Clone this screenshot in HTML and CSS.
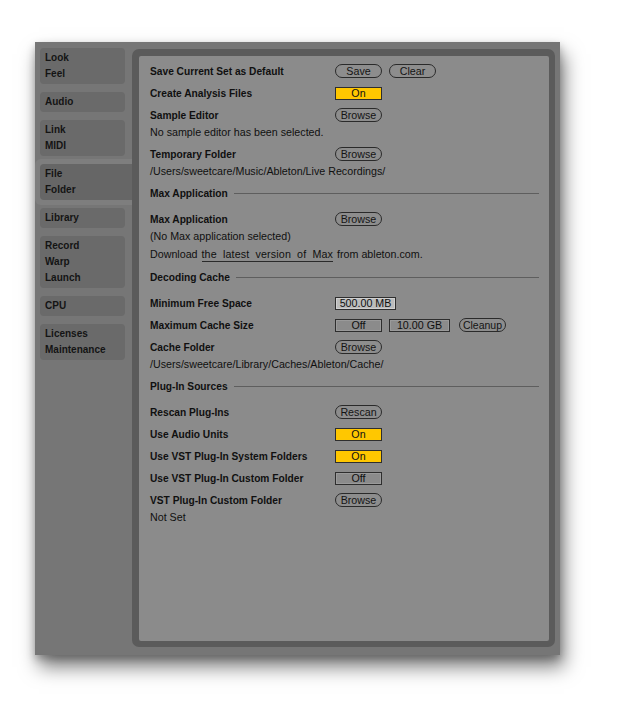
FILE: index.html
```html
<!DOCTYPE html>
<html>
<head>
<meta charset="utf-8">
<link rel="stylesheet" href="styles.css">
</head>
<body>
<div class="page">
<div class="window">
  <div class="sidebar">
    <div class="tab"><div>Look</div><div>Feel</div></div>
    <div class="tab"><div>Audio</div></div>
    <div class="tab"><div>Link</div><div>MIDI</div></div>
    <div class="tab-halo"><div class="tab selected"><div>File</div><div>Folder</div></div></div>
    <div class="tab"><div>Library</div></div>
    <div class="tab"><div>Record</div><div>Warp</div><div>Launch</div></div>
    <div class="tab"><div>CPU</div></div>
    <div class="tab"><div>Licenses</div><div>Maintenance</div></div>
  </div>
  <div class="frame">
    <div class="panel">
      <div class="row"><span class="label">Save Current Set as Default</span><div class="controls"><span class="pill">Save</span><span class="pill">Clear</span></div></div>
      <div class="row"><span class="label">Create Analysis Files</span><div class="controls"><span class="toggle on">On</span></div></div>
      <div class="row"><span class="label">Sample Editor</span><div class="controls"><span class="pill">Browse</span></div></div>
      <div class="sub">No sample editor has been selected.</div>
      <div class="row"><span class="label">Temporary Folder</span><div class="controls"><span class="pill">Browse</span></div></div>
      <div class="sub">/Users/sweetcare/Music/Ableton/Live Recordings/</div>

      <div class="section">Max Application</div>
      <div class="row"><span class="label">Max Application</span><div class="controls"><span class="pill">Browse</span></div></div>
      <div class="sub tight">(No Max application selected)</div>
      <div class="sub note">Download <span class="link">the latest version of Max</span> from ableton.com.</div>

      <div class="section">Decoding Cache</div>
      <div class="row"><span class="label">Minimum Free Space</span><div class="controls"><span class="field light">500.00 MB</span></div></div>
      <div class="row"><span class="label">Maximum Cache Size</span><div class="controls"><span class="toggle">Off</span><span class="field">10.00 GB</span><span class="pill auto">Cleanup</span></div></div>
      <div class="row"><span class="label">Cache Folder</span><div class="controls"><span class="pill">Browse</span></div></div>
      <div class="sub">/Users/sweetcare/Library/Caches/Ableton/Cache/</div>

      <div class="section">Plug-In Sources</div>
      <div class="row"><span class="label">Rescan Plug-Ins</span><div class="controls"><span class="pill">Rescan</span></div></div>
      <div class="row"><span class="label">Use Audio Units</span><div class="controls"><span class="toggle on">On</span></div></div>
      <div class="row"><span class="label">Use VST Plug-In System Folders</span><div class="controls"><span class="toggle on">On</span></div></div>
      <div class="row"><span class="label">Use VST Plug-In Custom Folder</span><div class="controls"><span class="toggle">Off</span></div></div>
      <div class="row"><span class="label">VST Plug-In Custom Folder</span><div class="controls"><span class="pill">Browse</span></div></div>
      <div class="sub">Not Set</div>
    </div>
  </div>
</div>
</div>
</body>
</html>
```

FILE: styles.css
```css
html, body {
  margin: 0;
  padding: 0;
  background: #ffffff;
}

body {
  font-family: "Liberation Sans", Arial, sans-serif;
  color: #101010;
}

.page {
  padding: 42px 0 57px 35px;
}

.window {
  width: 525px;
  height: 613px;
  background: #767676;
  display: flex;
  box-shadow: 4px 12px 18px rgba(0, 0, 0, 0.5), 0 4px 8px rgba(0, 0, 0, 0.25);
}

.sidebar {
  width: 97px;
  flex: none;
  box-sizing: border-box;
  padding: 6px 0 0 5px;
  display: flex;
  flex-direction: column;
  gap: 8px;
}

.tab {
  width: 85px;
  box-sizing: border-box;
  background: #6a6a6a;
  border-radius: 4px;
  padding: 2px 0 2px 5px;
  font-size: 10px;
  font-weight: bold;
  line-height: 16px;
  color: #141414;
}

.tab-halo {
  margin: -5px 0 -5px -5px;
  padding: 5px 0 5px 5px;
  width: 92px;
  background: #7e7e7e;
  border-radius: 6px 0 0 6px;
}

.tab.selected {
  width: 92px;
  background: #666666;
  border-radius: 4px 0 0 4px;
}

.frame {
  margin: 7px 0 8px 0;
  width: 423px;
  flex: none;
  box-sizing: border-box;
  background: #5b5b5b;
  border-radius: 7px;
  padding: 7px 6px 6px 7px;
  display: flex;
}

.panel {
  flex: 1;
  background: #8b8b8b;
  border-radius: 2px;
  padding: 4px 10px 0 11px;
  display: flex;
  flex-direction: column;
}

.row {
  height: 22px;
  display: flex;
  align-items: center;
  flex: none;
}

.label {
  width: 185px;
  flex: none;
  font-size: 10.2px;
  font-weight: bold;
  white-space: nowrap;
}

.controls {
  display: flex;
  align-items: center;
  gap: 7px;
}

.sub {
  height: 12px;
  line-height: 12px;
  font-size: 10.7px;
  margin-bottom: 5px;
  white-space: nowrap;
  flex: none;
}

.sub.tight {
  margin-bottom: 0;
}

.sub.note {
  margin-top: 6px;
  margin-bottom: 6px;
}

.link {
  word-spacing: 3px;
  letter-spacing: 0.15px;
  border-bottom: 1px solid #2a2a2a;
  padding-bottom: 1px;
  margin: 0 1px;
}

.section {
  height: 22px;
  display: flex;
  align-items: center;
  font-size: 10.2px;
  font-weight: bold;
  margin-bottom: 4px;
  flex: none;
}

.section::after {
  content: "";
  flex: 1;
  height: 1px;
  background: #5e5e5e;
  margin-left: 6px;
}

.pill {
  width: 47px;
  height: 14px;
  box-sizing: border-box;
  border: 1px solid #2a2a2a;
  border-radius: 7px;
  display: inline-flex;
  align-items: center;
  justify-content: center;
  font-size: 10.7px;
  line-height: 12px;
  color: #141414;
  background: #8d8d8d;
}

.pill.auto {
  width: 47px;
  margin-left: 2px;
  font-size: 10.5px;
}

.toggle {
  width: 47px;
  height: 13px;
  box-sizing: border-box;
  border: 1px solid #2e2e2e;
  display: inline-flex;
  align-items: center;
  justify-content: center;
  font-size: 10.7px;
  line-height: 11px;
  background: #8b8b8b;
  box-shadow: inset 0 0 0 1px #9a9a9a;
}

.toggle.on {
  background: #ffc700;
  box-shadow: none;
}

.field {
  width: 61px;
  height: 13px;
  box-sizing: border-box;
  border: 1px solid #2e2e2e;
  display: inline-flex;
  align-items: center;
  justify-content: center;
  font-size: 10.7px;
  line-height: 11px;
  background: #8b8b8b;
  box-shadow: inset 0 0 0 1px #9a9a9a;
}

.field.light {
  background: #bcbcbc;
  box-shadow: inset 0 0 0 1px #d0d0d0;
}
```
